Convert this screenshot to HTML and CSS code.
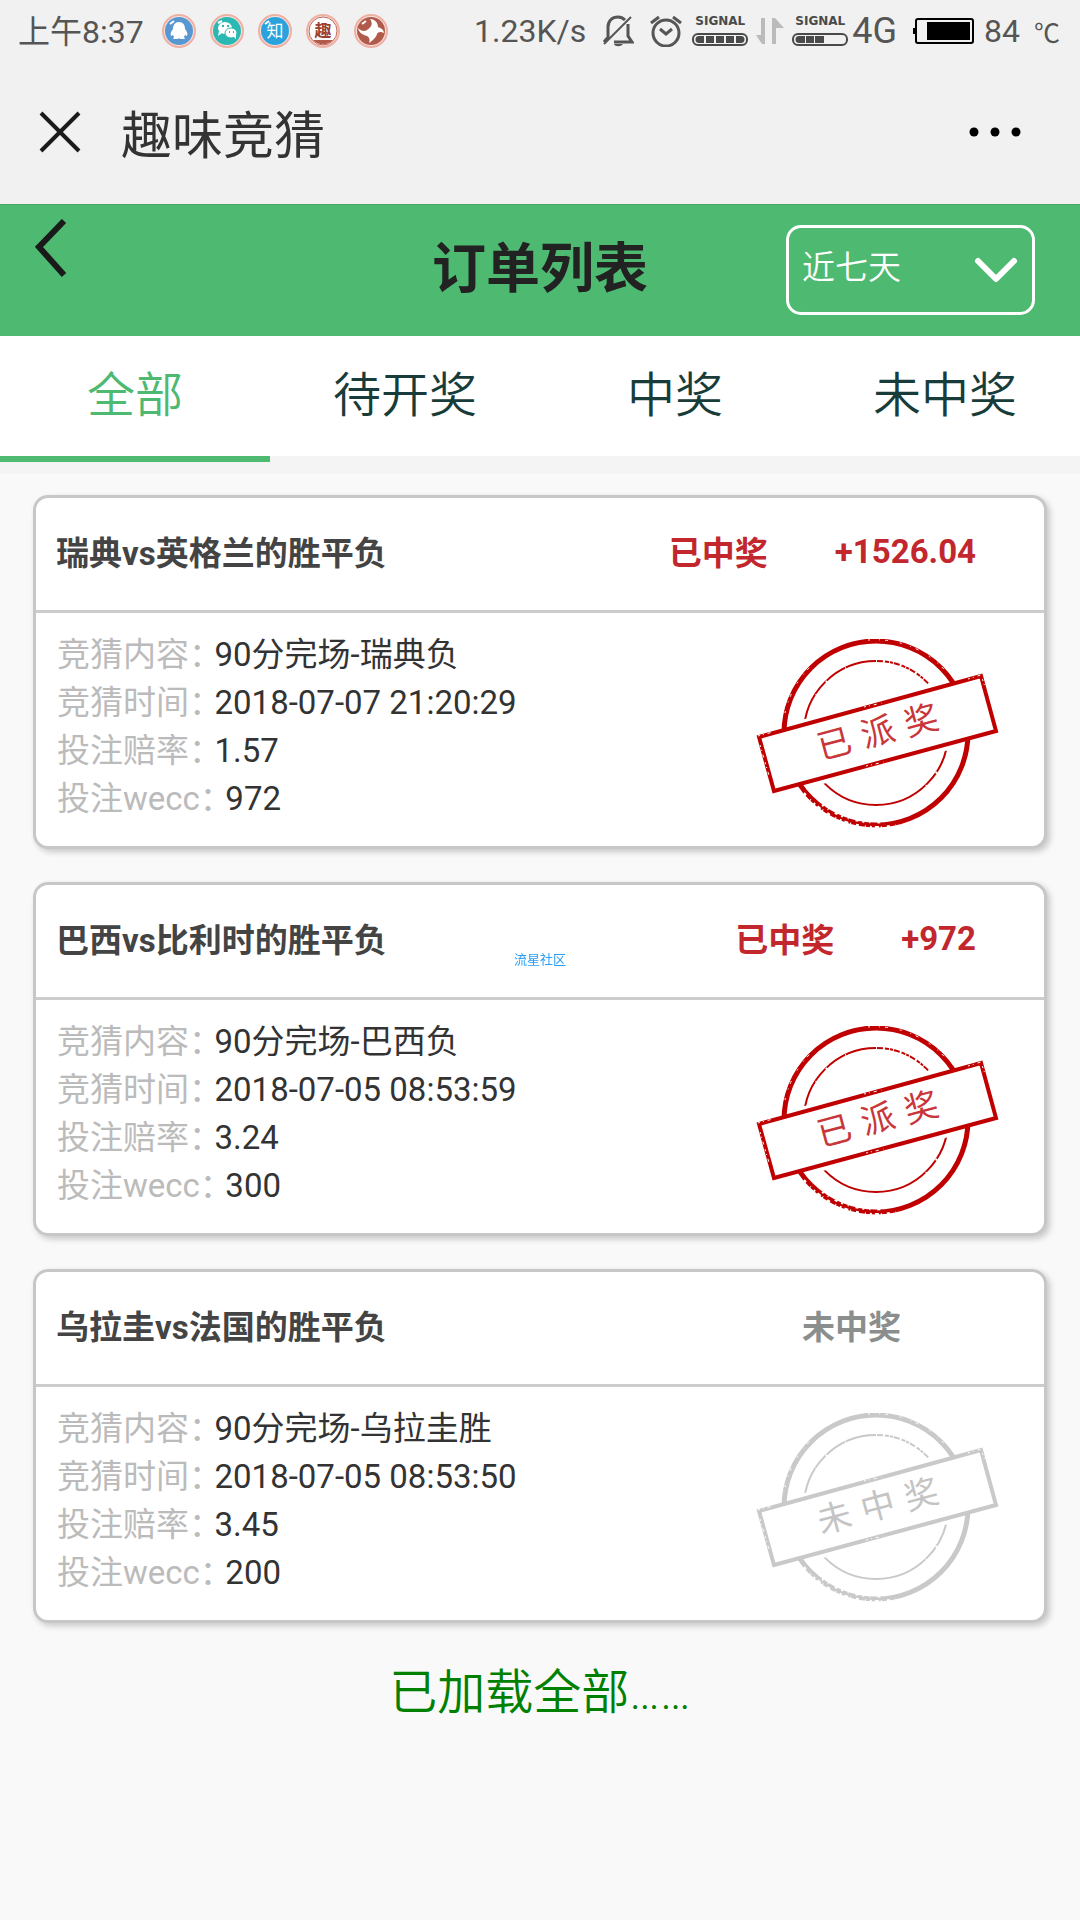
FILE: index.html
```html
<!DOCTYPE html>
<html lang="zh-CN">
<head>
<meta charset="utf-8">
<meta name="viewport" content="width=device-width, initial-scale=1">
<title>趣味竞猜</title>
<link rel="stylesheet" href="styles.css">
</head>
<body>
<svg class="defs" aria-hidden="true">
  <symbol id="stamp" viewBox="0 0 243 189">
    <circle cx="120" cy="94" r="72" fill="none" stroke="currentColor" stroke-width="2"/>
    <path d="M120 22A72 72 0 0 1 175 48" fill="none" stroke="#fff" stroke-width="3" stroke-dasharray="1 6 2 4 1 3"/>
    <path d="M60 56A72 72 0 0 1 100 25M170 147A72 72 0 0 0 186 122" fill="none" stroke="#fff" stroke-width="2" stroke-dasharray="1 15 2 22"/>
    <path d="M3 99 225 37 240 92 18 152Z" fill="#fff" stroke="#fff" stroke-width="12"/>
    <circle cx="120" cy="94" r="92" fill="none" stroke="currentColor" stroke-width="5"/>
    <path d="M48 154A94 94 0 0 0 140 186" fill="none" stroke="#fff" stroke-width="2" stroke-dasharray="3 6 1 4 2 3 4 2 1 5"/>
    <path d="M66 166A90 90 0 0 0 128 183" fill="none" stroke="#fff" stroke-width="2" stroke-dasharray="2 5 1 7 3 4"/>
    <path d="M112 1A94 94 0 0 1 193 36M29 74A94 94 0 0 1 56 26" fill="none" stroke="#fff" stroke-width="1" stroke-dasharray="2 9 1 5 3 12"/>
    <path d="M3 98 225 37 240 92 18 152Z" fill="#fff" stroke="currentColor" stroke-width="4"/>
    <path d="M108 68 126 64M110 127 128 123M2 97 17 93M4 106 14 140M212 40 225 36 229 48" fill="none" stroke="#fff" stroke-width="1" stroke-dasharray="2 3 1 4 3 5"/>
  </symbol>
  <symbol id="arrows" viewBox="0 0 28 28">
    <path d="M9 1V27H6L0 18H5V1ZM16 27V1H19L28 11H20V27Z" fill="#bbb"/>
  </symbol>
</svg>

<header class="status">
  <span class="clock">上午8:37</span>
  <div class="apps" aria-hidden="true">
    <svg class="app" viewBox="0 0 36 36"><circle cx="18" cy="18" r="16" fill="#fbe3de" stroke="#efb0a4" stroke-width="2"/><circle cx="18" cy="18" r="14" fill="#5797d2"/><path d="M18 9c4 0 6 3 6 7 2 2 3 5 2 7l-2-1-1 2 1 2h-5l-1-1-1 1h-5l1-2-1-2-2 1c-1-2 0-5 2-7 0-4 2-7 6-7Z" fill="#fff"/><path d="M9 11l4-3" stroke="#fff" stroke-width="2"/></svg>
    <svg class="app" viewBox="0 0 36 36"><circle cx="18" cy="18" r="16" fill="#fbe3de" stroke="#efb0a4" stroke-width="2"/><circle cx="18" cy="18" r="14" fill="#2cb8b2"/><ellipse cx="16" cy="15" rx="7" ry="6" fill="#fff"/><ellipse cx="22" cy="20" rx="6" ry="5" fill="#fff" stroke="#2cb8b2"/><path d="M10 18l-1 5 4-3M24 23l3 3v-4" fill="#fff"/><path d="M13 13h2M18 13h2M20 19h1M24 19h1" stroke="#2cb8b2" stroke-width="2"/><path d="M9 10l4-2" stroke="#fff" stroke-width="2"/></svg>
    <svg class="app" viewBox="0 0 36 36"><circle cx="18" cy="18" r="16" fill="#fbe3de" stroke="#efb0a4" stroke-width="2"/><circle cx="18" cy="18" r="14" fill="#2aa3dc"/><text class="app-char" x="18" y="24" fill="#fff">知</text><path d="M8 11l4-3" stroke="#fff" stroke-width="2"/></svg>
    <svg class="app" viewBox="0 0 36 36"><circle cx="18" cy="18" r="16" fill="#fbe3de" stroke="#efb0a4" stroke-width="2"/><circle cx="18" cy="18" r="14" fill="#fff" stroke="#b86a5c"/><path d="M8 27h20a14 14 0 0 1-20 0Z" fill="#b35a4a"/><text class="app-char app-char-bold" x="18" y="24" fill="#9c4032">趣</text></svg>
    <svg class="app" viewBox="0 0 36 36"><circle cx="18" cy="18" r="16" fill="#fbe3de" stroke="#efb0a4" stroke-width="2"/><circle cx="18" cy="18" r="14" fill="#b05a4c"/><path d="M17 6C21 6 25 9 25 14C28 15 31 17 31 20C27 18 25 19 24 21C23 25 19 28 16 30C17 27 17 25 14 23C10 22 6 20 5 15C8 18 11 19 14 17C19 14 20 10 17 6Z" fill="#fff"/><path d="M9 11l4-3" stroke="#fff" stroke-width="2"/></svg>
  </div>
  <div class="indicators">
    <span class="rate">1.23K/s</span>
    <svg class="bell" viewBox="0 0 32 32" fill="none" stroke="#555" stroke-width="3"><path d="M6 21V12C6 6 10 2 16 2c3 0 5 1 7 3M26 9v12l4 6H12M2 27l5-6"/><path d="M2 29 29 2" stroke-width="2"/><path d="M12 29c1 3 7 3 9 0Z" fill="#555" stroke="none"/></svg>
    <svg class="alarm" viewBox="0 0 32 32" fill="none" stroke="#555" stroke-width="3"><circle cx="16" cy="18" r="13"/><path d="M10 14l6 5 6-5M1 8l8-6M31 8l-8-6"/></svg>
    <span class="signal"><span class="signal-name">SIGNAL</span>
      <svg viewBox="0 0 56 13"><rect x="1" y="1" width="54" height="11" rx="5" fill="none" stroke="#4a4a4a" stroke-width="2"/><path d="M7 3H12V10H7A3 3 0 0 1 7 3ZM14 3h8v7h-8ZM24 3h8v7h-8ZM34 3h8v7h-8ZM44 3h5a3 3 0 0 1 0 7h-5Z" fill="#4a4a4a"/></svg></span>
    <svg class="arrows" aria-hidden="true"><use href="#arrows"/></svg>
    <span class="signal"><span class="signal-name">SIGNAL</span>
      <svg viewBox="0 0 56 13"><rect x="1" y="1" width="54" height="11" rx="5" fill="none" stroke="#4a4a4a" stroke-width="2"/><path d="M7 3H13V10H7A3 3 0 0 1 7 3ZM14 3h8v7h-8ZM23 3h9v7h-9Z" fill="#4a4a4a"/></svg></span>
    <span class="network">4G</span>
    <svg class="battery" viewBox="0 0 61 26"><rect x="3" y="1" width="57" height="24" rx="2" fill="none" stroke="#000" stroke-width="2"/><path d="M0 10h3v6H0ZM14 4h43v18H14Z"/></svg>
    <span class="level">84</span>
    <span class="degree">℃</span>
  </div>
</header>

<div class="titlebar">
  <button class="icon-button" type="button" aria-label="关闭"><svg class="close" viewBox="0 0 42 42"><path d="M2 2 40 40M40 2 2 40" stroke="#1a1a1a" stroke-width="4"/></svg></button>
  <span class="titlebar-name">趣味竞猜</span>
  <button class="icon-button" type="button" aria-label="更多"><svg class="more" viewBox="0 0 52 10"><circle cx="5" cy="5" r="4.500"/><circle cx="26" cy="5" r="4.500"/><circle cx="47" cy="5" r="4.500"/></svg></button>
</div>

<div class="page-head">
  <a class="back" href="#" aria-label="返回"><svg viewBox="0 0 32 58"><path d="M29 2 4 28 29 56" fill="none" stroke="#1a1a1a" stroke-width="6"/></svg></a>
  <h1>订单列表</h1>
  <label class="range">
    <select aria-label="时间范围"><option>近七天</option></select>
    <svg class="caret" viewBox="0 0 44 26"><path d="M4 4 22 22 40 4" fill="none" stroke="#fff" stroke-width="6" stroke-linecap="round" stroke-linejoin="round"/></svg>
  </label>
</div>

<nav class="tabs">
  <a class="tab tab-active" href="#">全部</a>
  <a class="tab" href="#">待开奖</a>
  <a class="tab" href="#">中奖</a>
  <a class="tab" href="#">未中奖</a>
</nav>

<main class="orders">
  <article class="order">
    <div class="order-head"><h2>瑞典vs英格兰的胜平负</h2><span class="result">已中奖</span><span class="amount">+1526.04</span></div>
    <div class="order-body">
      <dl>
        <div class="row"><dt>竞猜内容：</dt><dd>90分完场-瑞典负</dd></div>
        <div class="row"><dt>竞猜时间：</dt><dd>2018-07-07 21:20:29</dd></div>
        <div class="row"><dt>投注赔率：</dt><dd>1.57</dd></div>
        <div class="row"><dt>投注wecc：</dt><dd>972</dd></div>
      </dl>
      <svg class="stamp" viewBox="0 0 243 189"><use href="#stamp"/><text class="stamp-text" transform="translate(122 94) rotate(-15)" x="-45 0 45" y="11">已派奖</text></svg>
    </div>
  </article>

  <article class="order">
    <div class="order-head"><h2>巴西vs比利时的胜平负</h2><span class="result">已中奖</span><span class="amount">+972</span></div>
    <div class="order-body">
      <dl>
        <div class="row"><dt>竞猜内容：</dt><dd>90分完场-巴西负</dd></div>
        <div class="row"><dt>竞猜时间：</dt><dd>2018-07-05 08:53:59</dd></div>
        <div class="row"><dt>投注赔率：</dt><dd>3.24</dd></div>
        <div class="row"><dt>投注wecc：</dt><dd>300</dd></div>
      </dl>
      <svg class="stamp" viewBox="0 0 243 189"><use href="#stamp"/><text class="stamp-text" transform="translate(122 94) rotate(-15)" x="-45 0 45" y="11">已派奖</text></svg>
    </div>
  </article>

  <article class="order order-lost">
    <div class="order-head"><h2>乌拉圭vs法国的胜平负</h2><span class="result">未中奖</span><span class="amount"></span></div>
    <div class="order-body">
      <dl>
        <div class="row"><dt>竞猜内容：</dt><dd>90分完场-乌拉圭胜</dd></div>
        <div class="row"><dt>竞猜时间：</dt><dd>2018-07-05 08:53:50</dd></div>
        <div class="row"><dt>投注赔率：</dt><dd>3.45</dd></div>
        <div class="row"><dt>投注wecc：</dt><dd>200</dd></div>
      </dl>
      <svg class="stamp" viewBox="0 0 243 189"><use href="#stamp"/><text class="stamp-text" transform="translate(122 94) rotate(-15)" x="-45 0 45" y="11">未中奖</text></svg>
    </div>
  </article>
</main>

<p class="loaded">已加载全部……</p>
<span class="watermark">流星社区</span>
</body>
</html>
```
FILE: styles.css
```css
* {
  box-sizing: border-box;
}

body {
  margin: 0;
  min-height: 100vh;
  background: #f9f9f9;
  color: #333;
  font-family: Roboto, "Noto Sans CJK SC", sans-serif;
  font-size: 33px;
}

h1,
h2,
p,
dl,
dd {
  margin: 0;
}

svg {
  display: block;
  flex: none;
}

.defs {
  position: absolute;
  width: 0;
  height: 0;
}

/* System status bar */
.status {
  display: flex;
  align-items: center;
  height: 62px;
  padding: 0 20px 0 18px;
  background: #f1f1f1;
  color: #555;
  font-size: 32px;
  white-space: nowrap;
}

.clock {
  padding-bottom: 4px;
}

.apps {
  display: flex;
  gap: 12px;
  margin-left: 17px;
}

.app {
  width: 36px;
  height: 36px;
}

.app-char {
  font-size: 17px;
  text-anchor: middle;
}

.app-char-bold {
  font-weight: 700;
}

.indicators {
  display: flex;
  align-items: center;
  gap: 8px;
  margin-left: auto;
}

.bell,
.alarm {
  width: 32px;
  height: 32px;
}

.bell {
  margin: 0 8px;
}

.alarm {
  margin-right: 2px;
}

.signal {
  display: flex;
  flex-direction: column;
  gap: 6px;
  align-items: center;
  width: 56px;
  padding-bottom: 2px;
}

.signal-name {
  font: 700 12px/12px "DejaVu Sans", sans-serif;
  color: #4a4a4a;
}

.signal svg {
  width: 56px;
  height: 13px;
}

.arrows {
  width: 28px;
  height: 28px;
}

.network {
  margin-left: -4px;
  font-size: 36px;
}

.battery {
  width: 61px;
  height: 26px;
  margin: 0 2px 0 8px;
}

.degree {
  margin-left: 6px;
  font-size: 26px;
}

/* Web view title bar */
.titlebar {
  display: flex;
  align-items: center;
  height: 142px;
  padding: 0 59px 2px 39px;
  background: #f1f1f1;
}

.icon-button {
  padding: 0;
  border: 0;
  background: none;
}

.close {
  width: 42px;
  height: 42px;
}

.more {
  width: 52px;
  height: 10px;
}

.titlebar-name {
  flex: 1;
  margin-left: 40px;
  font-size: 51px;
}

/* Green page header */
.page-head {
  display: grid;
  grid-template-columns: 1fr auto 1fr;
  align-items: center;
  height: 132px;
  padding: 0 45px 2px;
  border-top: 1px solid #45a565;
  background: #4db971;
}

.back {
  align-self: start;
  margin-top: 14px;
  margin-left: -10px;
}

.back svg {
  width: 32px;
  height: 58px;
}

h1 {
  color: #222;
  font-size: 54px;
  line-height: 72px;
}

.range {
  position: relative;
  justify-self: end;
}

.range select {
  display: block;
  width: 249px;
  height: 90px;
  padding: 0 13px 4px;
  border: 3px solid #fff;
  border-radius: 15px;
  appearance: none;
  background: transparent;
  color: #fff;
  font: inherit;
  font-weight: 350;
}

.caret {
  position: absolute;
  top: 32px;
  right: 17px;
  width: 44px;
  height: 26px;
  pointer-events: none;
}

/* Filter tabs */
.tabs {
  display: grid;
  grid-template-columns: repeat(4, 1fr);
  padding-bottom: 12px;
  background: #f4f4f4;
}

.tab {
  border-bottom: 6px solid #f4f4f4;
  background: #fff;
  background-clip: padding-box;
  color: #173c39;
  font-size: 48px;
  font-weight: 350;
  line-height: 120px;
  text-align: center;
  text-decoration: none;
}

.tab-active {
  border-bottom-color: #4db971;
  color: #4db971;
}

/* Order cards */
.orders {
  display: flex;
  flex-direction: column;
  gap: 33px;
  padding: 21px 33px 0;
}

.order {
  border: 3px solid #c7c7c7;
  border-radius: 15px;
  background: #fff;
  box-shadow: 3px 3px 6px rgba(0, 0, 0, 0.2);
}

.order-head {
  display: flex;
  align-items: center;
  height: 115px;
  padding: 0 68px 6px 20px;
  border-bottom: 3px solid #ccc;
  color: #c1272d;
  font-weight: 700;
}

h2 {
  flex: 1;
  color: #444;
  font-size: 33px;
}

.amount {
  min-width: 8px;
  margin-left: 67px;
}

.order-lost .result {
  color: #8a8f8d;
}

.order-body {
  display: flex;
  justify-content: space-between;
  padding: 18px 45px 18px 21px;
}

.row {
  display: flex;
  gap: 9px;
  line-height: 48px;
}

dt {
  color: #bbb;
  font-feature-settings: "halt";
}

.stamp {
  width: 243px;
  height: 189px;
  margin-top: 8px;
  color: #c00000;
}

.stamp-text {
  fill: #c8363a;
  font-size: 34px;
  text-anchor: middle;
}

.order-lost .stamp {
  color: #c9c9c9;
}

.order-lost .stamp-text {
  fill: #c4c4c4;
}

.loaded {
  margin-top: 35px;
  color: #008000;
  font-size: 48px;
  font-weight: 350;
  line-height: 70px;
  text-align: center;
}

.watermark {
  position: fixed;
  top: 50%;
  left: 50%;
  transform: translate(-50%, -50%);
  color: #2b9ff5;
  font-size: 13px;
  line-height: 16px;
}
```
